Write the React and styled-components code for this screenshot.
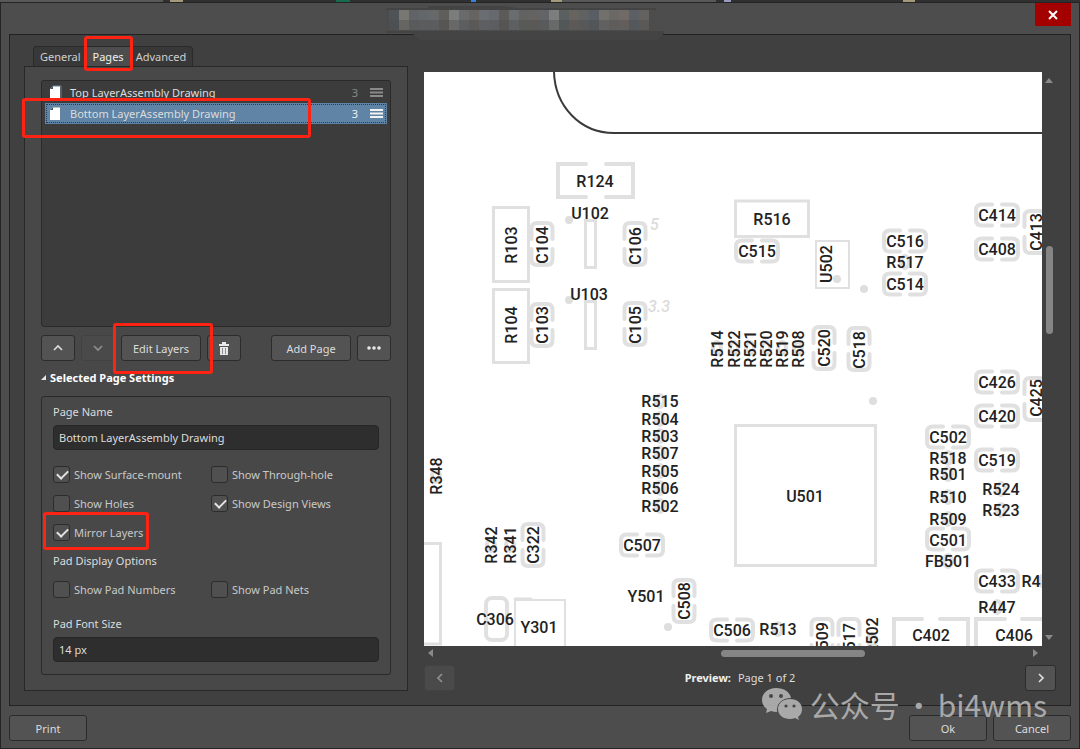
import { useState } from 'react'
import styled, { createGlobalStyle, css } from 'styled-components'

const pages = ['Top LayerAssembly Drawing', 'Bottom LayerAssembly Drawing']

// [label, x, y, 'v' when it reads upwards]
const designators = [
    ['R124', 595, 181], ['U102', 590, 213], ['U103', 589, 294],
    ['R103', 511, 245, 'v'], ['C104', 542, 245, 'v'], ['C106', 635, 246, 'v'],
    ['R104', 511, 325, 'v'], ['C103', 542, 325, 'v'], ['C105', 635, 325, 'v'],
    ['R516', 772, 219], ['C515', 757, 251], ['U502', 826, 264, 'v'],
    ['C516', 905, 241], ['R517', 905, 262], ['C514', 905, 284],
    ['C414', 997, 215], ['C408', 997, 249], ['C413', 1036, 232, 'v'],
    ['R514', 717, 349, 'v'], ['R522', 734, 349, 'v'], ['R521', 750, 349, 'v'],
    ['R520', 766, 349, 'v'], ['R519', 782, 349, 'v'], ['R508', 798, 349, 'v'],
    ['C520', 824, 348, 'v'], ['C518', 859, 350, 'v'],
    ['C426', 997, 382], ['C425', 1036, 398, 'v'], ['C420', 997, 416],
    ['R515', 660, 401], ['R504', 660, 419], ['R503', 660, 436], ['R507', 660, 453],
    ['R505', 660, 471], ['R506', 660, 488], ['R502', 660, 506],
    ['R348', 436, 476, 'v'], ['R342', 491, 545, 'v'], ['R341', 510, 545, 'v'], ['C322', 533, 545, 'v'],
    ['C507', 642, 545], ['Y501', 646, 596], ['C508', 684, 601, 'v'],
    ['C306', 495, 619], ['Y301', 539, 627], ['U501', 805, 496],
    ['C502', 948, 437], ['R518', 948, 458], ['R501', 948, 474], ['R510', 948, 497],
    ['R509', 948, 519], ['C501', 948, 540], ['FB501', 948, 561],
    ['C519', 997, 460], ['R524', 1001, 489], ['R523', 1001, 510],
    ['C433', 997, 581], ['R4', 1031, 581], ['R447', 997, 607],
    ['C506', 732, 630], ['R513', 778, 629],
    ['C509', 822, 641, 'v'], ['C517', 849, 642, 'v'], ['R502', 872, 636, 'v'],
    ['C402', 931, 635], ['C406', 1014, 635],
]

const capacitors = [
    [542, 244, 'v'], [635, 244, 'v'], [542, 325, 'v'], [635, 324, 'v'],
    [757, 251], [905, 241], [905, 284], [997, 215], [997, 249], [1035, 232, 'v'],
    [824, 348, 'v'], [859, 349, 'v'], [997, 382], [1035, 399, 'v'], [997, 416],
    [533, 545, 'v'], [642, 545], [684, 601, 'v'], [948, 437], [948, 539],
    [997, 460], [997, 581], [732, 630], [822, 640, 'v'], [849, 640, 'v'],
]

const resistors = [
    [905, 262], [717, 348], [734, 348], [750, 348], [766, 348], [782, 348], [798, 348],
    [660, 401], [660, 419], [660, 436], [660, 453], [660, 471], [660, 488], [660, 506],
    [436, 476], [491, 545], [510, 545], [948, 458], [948, 474], [948, 497], [948, 519], [948, 561],
    [1001, 489], [1001, 510], [1044, 581], [997, 607], [778, 629], [872, 640],
]

const dots = [[569, 220], [569, 300], [837, 279], [864, 289], [873, 401], [668, 627]]

const titleBlocks = [
    '#4d5357', '#797772', '#616466', '#646769', '#66686a', '#605e5b', '#7b7c7c', '#686a6c', '#666360',
    '#6a6d71', '#66696d', '#5d5b5a', '#696d70', '#626261', '#646361', '#626467', '#7c7d7d', '#5a5f5f',
    '#67635f', '#5f6162', '#585e63', '#72706d', '#6b6966', '#706b67', '#5c6064', '#646261',
]

function BoardPreview() {
    return (
        <Board viewBox="424 72 618 574" preserveAspectRatio="xMinYMin slice" role="img" aria-label="Assembly drawing">
            <g fill="none" stroke="#e0e0e0" strokeWidth="4" strokeLinecap="round">
                {resistors.map(([x, y], i) => (
                    <ellipse key={i} cx={x} cy={y} rx="4" ry="6" strokeWidth="4" />
                ))}
                {capacitors.map(([x, y, dir], i) => (
                    <path
                        key={i}
                        transform={`translate(${x} ${y})${dir ? ' rotate(90)' : ''}`}
                        d="M-5 -10.5H-15Q-21 -10.5 -21 -5V5Q-21 10.5 -15 10.5H-5M5 -10.5H15Q21 -10.5 21 -5V5Q21 10.5 15 10.5H5"
                    />
                ))}
                <path d="M586 164H558V197H586M606 164H633V197H606" />
                <path d="M922 619H894V650M940 619H968V650M1005 619H976V650M1022 619H1050" />
                <g strokeWidth="3">
                    <path d="M493.500 207.500H528.500V281.500H493.500ZM493.500 289.500H528.500V362.500H493.500Z" />
                    <path d="M585.500 220.500H595.500V267.500H585.500ZM585.500 301.500H595.500V348.500H585.500Z" />
                    <path d="M735.500 201H808.500V236.500H735.500ZM735.500 425.500H875.500V565.500H735.500Z" />
                    <path d="M420 543.500H440.500V644H420" />
                    <rect x="486" y="598" width="21" height="42" rx="6" strokeWidth="4" />
                </g>
                <path d="M816 241H849V288H816ZM515 600H565V650M515 600V650" strokeWidth="2" />
                <path d="M515 599H531" strokeWidth="3" />
            </g>
            <g fill="#dedede">
                {dots.map(([x, y]) => <circle key={`${x}-${y}`} cx={x} cy={y} r="4" />)}
            </g>
            <path d="M554 72C555 106 580 133 614 133H1042" fill="none" stroke="#3a3a3a" strokeWidth="2" />
            <NetText x="650" y="230">5</NetText>
            <NetText x="648" y="312">3.3</NetText>
            {designators.map(([label, x, y, dir]) => (
                <Designator key={`${label}-${x}`} y="6" transform={`translate(${x} ${y})${dir ? ' rotate(-90)' : ''}`}>
                    {label}
                </Designator>
            ))}
        </Board>
    )
}

function Arrow({ turn }) {
    return (
        <svg width="14" height="18" viewBox="-7 -9 14 18" aria-hidden="true">
            <path d="M-4 2L0 -3L4 2Z" fill="#8a8a8a" transform={`rotate(${turn})`} />
        </svg>
    )
}

function Chevron({ turn = 0 }) {
    return (
        <svg width="12" height="12" viewBox="-6 -6 12 12" aria-hidden="true">
            <path d="M-4 2L0 -2L4 2" fill="none" stroke="currentColor" strokeWidth="1.700" transform={`rotate(${turn})`} />
        </svg>
    )
}

function Check({ id, label, checked, onChange }) {
    return (
        <CheckLabel htmlFor={id}>
            <CheckBox id={id} type="checkbox" checked={checked} onChange={() => onChange(id)} />
            {label}
        </CheckLabel>
    )
}

function App() {
    const [tab, setTab] = useState('Pages')
    const [selected, setSelected] = useState(1)
    const [pageName, setPageName] = useState(pages[1])
    const [fontSize, setFontSize] = useState('14 px')
    const [options, setOptions] = useState({ surface: true, views: true, mirror: true })

    function toggleOption(id) {
        setOptions({ ...options, [id]: !options[id] })
    }

    function selectPage(index) {
        setSelected(index)
        setPageName(pages[index])
    }

    const check = (id, label) => (
        <Check id={id} label={label} checked={!!options[id]} onChange={toggleOption} />
    )

    return (
        <>
            <GlobalStyle />
            <Screen>
                <Backdrop viewBox="0 0 1080 2" preserveAspectRatio="none" aria-hidden="true">
                    <path d="M0 0H163V2H0ZM556 0H716V2H556Z" fill="#585858" />
                    <path d="M170 0H183V2H170ZM551 0H562V2H551ZM903 0H915V2H903Z" fill="#a39a7c" />
                    <path d="M336 0H350V2H336Z" fill="#176b50" />
                    <path d="M471 0H476V2H471Z" fill="#3584d6" />
                    <path d="M724 0H731V2H724Z" fill="#9b9bbd" />
                </Backdrop>
                <Dialog>
                    <TitleBar>
                        <CloseButton aria-label="Close">
                            <svg width="10" height="10" viewBox="0 0 10 10">
                                <path d="M1 1L9 9M9 1L1 9" stroke="#fff" strokeWidth="2" />
                            </svg>
                        </CloseButton>
                    </TitleBar>
                    <TitleMosaic width="278" height="36" viewBox="386 6 278 36" aria-hidden="true">
                        <path d="M386 8H428V6H505L516 8H656V31H666L658 40H420L412 33H386Z" fill="#444" />
                        <path d="M386 10H656V31H386Z" fill="#4c4c4c" />
                        {titleBlocks.map((color, i) => (
                            <g key={i} fill={color}>
                                <rect x={389 + i * 10} y="10" width="10" height="10" />
                                <rect x={389 + i * 10} y="20" width="10" height="10" opacity="0.6" />
                            </g>
                        ))}
                    </TitleMosaic>
                    <Frame>
                        <Settings>
                            <Tabs role="tablist">
                                {['General', 'Pages', 'Advanced'].map((name) => (
                                    <Tab key={name} role="tab" aria-selected={tab === name} $active={tab === name} onClick={() => setTab(name)}>
                                        {name}
                                    </Tab>
                                ))}
                            </Tabs>
                            <Panel>
                                <PageList>
                                    {pages.map((name, i) => (
                                        <li key={name}>
                                            <PageRow $active={selected === i} onClick={() => selectPage(i)}>
                                                <svg width="14" height="15" viewBox="0 0 14 15" aria-hidden="true">
                                                    <path d="M5 1H12V14H2V4Z" fill="#fff" />
                                                    <path d="M2 4L5 1V4Z" fill="#3e5468" />
                                                    <path d="M5 1H13V14" fill="none" stroke="#6c8194" />
                                                </svg>
                                                <PageTitle>{name}</PageTitle>
                                                <span>3</span>
                                                <svg width="14" height="9" viewBox="0 0 14 9" aria-hidden="true">
                                                    <path d="M0 1H13M0 4.500H13M0 8H13" stroke="currentColor" strokeWidth="2" />
                                                </svg>
                                            </PageRow>
                                        </li>
                                    ))}
                                </PageList>
                                <Toolbar>
                                    <IconButton aria-label="Move up"><Chevron /></IconButton>
                                    <IconButton aria-label="Move down" disabled><Chevron turn={180} /></IconButton>
                                    <Button $width={80}>Edit Layers</Button>
                                    <IconButton aria-label="Delete">
                                        <svg width="10" height="13" viewBox="0 0 10 13" fill="#e8e8e8" aria-hidden="true">
                                            <path d="M3 2V0H7V2H10V4H0V2ZM1 5H9V13H1Z" />
                                            <path d="M3.500 6V12M6.500 6V12" stroke="#8d8d8d" />
                                        </svg>
                                    </IconButton>
                                    <Spacer />
                                    <Button $width={80}>Add Page</Button>
                                    <IconButton aria-label="More">
                                        <svg width="14" height="4" viewBox="0 0 14 4" fill="#e8e8e8" aria-hidden="true">
                                            <circle cx="2" cy="2" r="1.800" />
                                            <circle cx="7" cy="2" r="1.800" />
                                            <circle cx="12" cy="2" r="1.800" />
                                        </svg>
                                    </IconButton>
                                </Toolbar>
                                <SectionTitle>
                                    <svg width="6" height="6" viewBox="0 0 6 6" aria-hidden="true">
                                        <path d="M5 0V5H0Z" fill="#e8e8e8" />
                                    </svg>
                                    Selected Page Settings
                                </SectionTitle>
                                <Group>
                                    <FieldLabel htmlFor="page-name">Page Name</FieldLabel>
                                    <TextField id="page-name" value={pageName} onChange={(e) => setPageName(e.target.value)} />
                                    <CheckGrid $top={10}>
                                        {check('surface', 'Show Surface-mount')}
                                        {check('through', 'Show Through-hole')}
                                        {check('holes', 'Show Holes')}
                                        {check('views', 'Show Design Views')}
                                        {check('mirror', 'Mirror Layers')}
                                    </CheckGrid>
                                    <GroupCaption>Pad Display Options</GroupCaption>
                                    <CheckGrid $top={4}>
                                        {check('numbers', 'Show Pad Numbers')}
                                        {check('nets', 'Show Pad Nets')}
                                    </CheckGrid>
                                    <FieldLabel htmlFor="font-size" $spaced>Pad Font Size</FieldLabel>
                                    <TextField id="font-size" value={fontSize} onChange={(e) => setFontSize(e.target.value)} />
                                </Group>
                            </Panel>
                        </Settings>
                        <Preview>
                            <Viewport>
                                <BoardPreview />
                                <ScrollBar $vertical>
                                    <Arrow turn={0} />
                                    <Track $grow={156} />
                                    <Thumb $vertical $grow={88} />
                                    <Track $grow={294} />
                                    <Arrow turn={180} />
                                </ScrollBar>
                                <ScrollBar>
                                    <Arrow turn={-90} />
                                    <Track $grow={280} />
                                    <Thumb $grow={143} />
                                    <Track $grow={161} />
                                    <Arrow turn={90} />
                                </ScrollBar>
                            </Viewport>
                            <Pager>
                                <IconButton $narrow aria-label="Previous page" disabled><Chevron turn={-90} /></IconButton>
                                <span><b>Preview:</b>Page 1 of 2</span>
                                <IconButton $narrow aria-label="Next page"><Chevron turn={90} /></IconButton>
                            </Pager>
                        </Preview>
                    </Frame>
                    <BottomBar>
                        <Button $width={78}>Print</Button>
                        <Spacer />
                        <Button $width={78}>Ok</Button>
                        <Button $width={78}>Cancel</Button>
                    </BottomBar>
                </Dialog>
                <Marker $left={84} $top={36} $width={49} $height={35} />
                <Marker $left={22} $top={98} $width={289} $height={40} />
                <Marker $left={113} $top={323} $width={100} $height={51} />
                <Marker $left={43} $top={512} $width={106} $height={38} />
                <Watermark>
                    <svg width="40" height="34" viewBox="0 0 40 34" aria-hidden="true">
                        <path d="M14 1C6 1 0 6 0 13C0 17 2 20 5 22L4 26L9 24Q12 25 15 25C14 17 20 11 29 11C28 5 22 1 14 1Z" fill="#b4b4b4" />
                        <path d="M28 12C21 12 16 16 16 22C16 28 21 32 28 32Q31 32 33 31L37 33L36 30C39 28 40 25 40 22C40 16 35 12 28 12Z" fill="#b4b4b4" />
                        <g fill="#484848">
                            <circle cx="9" cy="9" r="2" />
                            <circle cx="19" cy="9" r="2" />
                            <circle cx="24" cy="19" r="1.600" />
                            <circle cx="32" cy="19" r="1.600" />
                        </g>
                    </svg>
                    <span>公众号</span>
                    <span>·</span>
                    <span>bi4wms</span>
                </Watermark>
            </Screen>
        </>
    )
}

export default App

const GlobalStyle = createGlobalStyle`
    * {
        box-sizing: border-box;
    }
    body {
        margin: 0;
        background: #242424;
        color: #dcdcdc;
        font: 11px/20px "Segoe UI", "Noto Sans", sans-serif;
    }
    button, input {
        font: inherit;
        color: inherit;
    }
`
const Screen = styled.div`
    position: relative;
    display: flex;
    flex-direction: column;
    min-height: 100vh;
`
const Backdrop = styled.svg`
    width: 100%;
    height: 2px;
    background: #303030;
`
const Dialog = styled.main`
    position: relative;
    flex: 1;
    display: flex;
    flex-direction: column;
    padding: 0 8px;
    border: 1px solid #242424;
    background: #4d4d4d;
`
const TitleBar = styled.header`
    display: flex;
    justify-content: flex-end;
    height: 31px;
`
const TitleMosaic = styled.svg`
    position: absolute;
    left: 385px;
    top: 3px;
`
const CloseButton = styled.button`
    display: flex;
    align-items: center;
    justify-content: center;
    width: 36px;
    height: 23px;
    border: none;
    background: #a30000;
`
const Frame = styled.div`
    flex: 1;
    display: grid;
    grid-template-columns: 384px 1fr;
    gap: 16px;
    padding: 11px 14px 14px;
    border: 1px solid #222;
    background: #404040;
`
const Settings = styled.section`
    display: flex;
    flex-direction: column;
`
const Tabs = styled.div`
    display: flex;
    align-self: flex-start;
    height: 20px;
    margin-left: 9px;
    border: 1px solid #2a2a2a;
    border-bottom: none;
    border-radius: 4px 4px 0 0;
    background: #383838;
`
const Tab = styled.button`
    padding: 0 6px;
    border: none;
    background: ${props => props.$active ? '#4d4d4d' : 'transparent'};
    color: ${props => props.$active ? '#f0f0f0' : '#cfcfcf'};
`
const Panel = styled.div`
    flex: 1;
    display: flex;
    flex-direction: column;
    padding: 13px 16px 15px;
    border: 1px solid #282828;
    background: #484848;
`
const PageList = styled.ul`
    flex: 1;
    margin: 0;
    padding: 1px 3px;
    list-style: none;
    border: 1px solid #2a2a2a;
    border-radius: 3px;
    background: #3c3c3c;
`
const PageRow = styled.button`
    display: flex;
    align-items: center;
    gap: 8px;
    width: 100%;
    height: 21px;
    padding: 0 3px;
    border: none;
    color: #8a8a8a;
    background: none;
    text-align: left;
    svg:last-child {
        margin-left: 4px;
    }
    ${props => props.$active && css`
        color: #f2f2f2;
        background: #5f84a6;
        outline: 1px dotted #1f3c58;
        outline-offset: -2px;
    `}
`
const PageTitle = styled.span`
    flex: 1;
    color: #dcdcdc;
`
const Toolbar = styled.div`
    display: flex;
    gap: 6px;
    margin-top: 8px;
`
const Spacer = styled.div`
    flex: 1;
`
const Button = styled.button`
    display: flex;
    align-items: center;
    justify-content: center;
    width: ${props => props.$width}px;
    height: 26px;
    padding: 2px 0 0;
    border: 1px solid #2c2c2c;
    border-radius: 3px;
    background: #535353;
    &:disabled {
        color: #8f8f8f;
        border-color: #424242;
        background: #4a4a4a;
    }
`
const IconButton = styled(Button)`
    width: ${props => props.$narrow ? 31 : 34}px;
    padding: 0;
`
const SectionTitle = styled.h2`
    display: flex;
    align-items: center;
    gap: 3px;
    margin: 7px 0 8px;
    font-size: 11px;
    line-height: 20px;
    color: #fff;
`
const Group = styled.div`
    display: flex;
    flex-direction: column;
    padding: 5px 11px 12px;
    border: 1px solid #2a2a2a;
    border-radius: 3px;
`
const FieldLabel = styled.label`
    margin-top: ${props => props.$spaced ? 10 : 0}px;
`
const GroupCaption = styled.div`
    margin-top: 4px;
`
const TextField = styled.input`
    width: 100%;
    height: 25px;
    margin-top: 3px;
    padding: 0 5px;
    border: 1px solid #262626;
    border-radius: 4px;
    background: #2e2e2e;
`
const CheckGrid = styled.div`
    display: grid;
    grid-template-columns: 158px 1fr;
    grid-auto-rows: 29px;
    margin-top: ${props => props.$top}px;
`
const CheckLabel = styled.label`
    display: flex;
    align-items: center;
    gap: 4px;
    color: #c8c8c8;
`
const CheckBox = styled.input`
    appearance: none;
    position: relative;
    width: 17px;
    height: 17px;
    margin: 0;
    border: 1px solid #2c2c2c;
    border-radius: 3px;
    background: #505050;
    &:checked::after {
        content: '';
        position: absolute;
        left: 3px;
        top: 3px;
        width: 9px;
        height: 5px;
        border: solid #e4e4e4;
        border-width: 0 0 2px 2px;
        transform: rotate(-45deg);
    }
`
const Preview = styled.section`
    display: flex;
    flex-direction: column;
    min-width: 0;
    padding-top: 26px;
`
const Viewport = styled.div`
    flex: 1;
    display: grid;
    grid-template-columns: 1fr 14px;
    grid-template-rows: 1fr 14px;
`
const Board = styled.svg`
    display: block;
    width: 100%;
    height: 100%;
    background: #fff;
`
const Designator = styled.text`
    font: 500 16px Roboto, sans-serif;
    text-anchor: middle;
    fill: #222;
`
const NetText = styled.text`
    font: italic 500 16px Roboto, sans-serif;
    fill: #dcdcdc;
`
const ScrollBar = styled.div`
    display: flex;
    align-items: center;
    flex-direction: ${props => props.$vertical ? 'column' : 'row'};
    svg {
        flex: none;
    }
`
const Track = styled.div`
    flex: ${props => props.$grow} 1 0;
`
const Thumb = styled.div`
    flex: ${props => props.$grow} 1 0;
    width: ${props => props.$vertical ? '7px' : 'auto'};
    height: ${props => props.$vertical ? 'auto' : '7px'};
    border-radius: 4px;
    background: #858585;
`
const Pager = styled.div`
    display: flex;
    align-items: center;
    justify-content: space-between;
    margin-top: 5px;
    b {
        margin-right: 7px;
        color: #f0f0f0;
    }
`
const BottomBar = styled.footer`
    display: flex;
    gap: 6px;
    padding: 9px 0 7px;
`
// red frames drawn over the controls
const Marker = styled.div`
    position: absolute;
    left: ${props => props.$left}px;
    top: ${props => props.$top}px;
    width: ${props => props.$width}px;
    height: ${props => props.$height}px;
    border: 3px solid #ff2314;
    border-radius: 3px;
    pointer-events: none;
`
const Watermark = styled.div`
    position: absolute;
    right: 33px;
    bottom: 25px;
    display: flex;
    align-items: center;
    gap: 4px;
    font: 30px/40px "Noto Sans CJK SC", sans-serif;
    color: #b4b4b4;
    opacity: 0.9;
    pointer-events: none;
    svg {
        margin-right: 4px;
    }
`
